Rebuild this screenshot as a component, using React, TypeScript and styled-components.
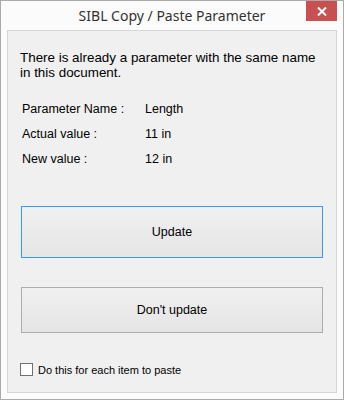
import React from "react";
import styled, { createGlobalStyle } from "styled-components";

const Global = createGlobalStyle`
  html, body { margin: 0; padding: 0; background: #ffffff; }
  * { box-sizing: border-box; }
`;

const Window = styled.div`
  width: 344px;
  height: 400px;
  border: 1px solid #aaaaaa;
  background: #fbfbfb;
  padding: 0 6px 6px 6px;
  display: flex;
  flex-direction: column;
`;

const TitleBar = styled.div`
  height: 29px;
  display: grid;
  grid-template-columns: 1fr auto 1fr;
  align-items: start;
  margin: 0 -6px 0 -6px;
  padding: 0 6px;
`;

const Title = styled.div`
  grid-column: 2;
  font-family: "Noto Sans", "Open Sans", sans-serif;
  font-size: 14px;
  line-height: 30px;
  color: #333333;
  white-space: nowrap;
`;

const CloseButton = styled.div`
  grid-column: 3;
  justify-self: end;
  width: 31px;
  height: 20px;
  background: #c75050;
  display: flex;
  align-items: center;
  justify-content: center;
`;

const Client = styled.div`
  flex: 1;
  border: 1px solid #d5d5d5;
  background: #f0f0f0;
  display: flex;
  flex-direction: column;
  padding: 19px 13px 0 13px;
  font-family: "Liberation Sans", Arial, sans-serif;
  color: #000;
`;

const Message = styled.p`
  margin: 0 0 0 -1px;
  font-size: 13.4px;
  line-height: 15px;
`;

const Fields = styled.div`
  display: grid;
  grid-template-columns: 123px 1fr;
  grid-auto-rows: 14px;
  row-gap: 11px;
  margin: 22px 0 0 1px;
  font-size: 12.5px;
  line-height: 14px;
`;

const Label = styled.div``;
const Value = styled.div``;

const Button = styled.div<{ $focused?: boolean; $height: number }>`
  height: ${(p) => p.$height}px;
  border: 1px solid ${(p) => (p.$focused ? "#3399ff" : "#adadad")};
  background: linear-gradient(#f0f0f0, #e5e5e5);
  display: flex;
  align-items: center;
  justify-content: center;
  font-size: 12.5px;
  color: #000;
`;

const Buttons = styled.div`
  display: flex;
  flex-direction: column;
  gap: 29px;
  margin-top: 40px;
`;

const CheckRow = styled.label`
  display: flex;
  align-items: center;
  gap: 5px;
  margin-top: 30px;
  margin-left: -1px;
  font-size: 11px;
`;

const Box = styled.span`
  width: 13px;
  height: 13px;
  border: 1px solid #707070;
  background: #ffffff;
  display: inline-block;
`;

export default function App() {
  return (
    <>
      <Global />
      <Window>
        <TitleBar>
          <Title>SIBL Copy / Paste Parameter</Title>
          <CloseButton>
            <svg width="10" height="9" viewBox="0 0 10 9">
              <path d="M1 0.5 L9 8.5 M9 0.5 L1 8.5" stroke="#fff" strokeWidth="2" />
            </svg>
          </CloseButton>
        </TitleBar>
        <Client>
          <Message>
            There is already a parameter with the same name
            <br />
            in this document.
          </Message>
          <Fields>
            <Label>Parameter Name :</Label>
            <Value>Length</Value>
            <Label>Actual value :</Label>
            <Value>11 in</Value>
            <Label>New value :</Label>
            <Value>12 in</Value>
          </Fields>
          <Buttons>
            <Button $focused $height={52}>Update</Button>
            <Button $height={46}>Don't update</Button>
          </Buttons>
          <CheckRow>
            <Box />
            Do this for each item to paste
          </CheckRow>
        </Client>
      </Window>
    </>
  );
}
